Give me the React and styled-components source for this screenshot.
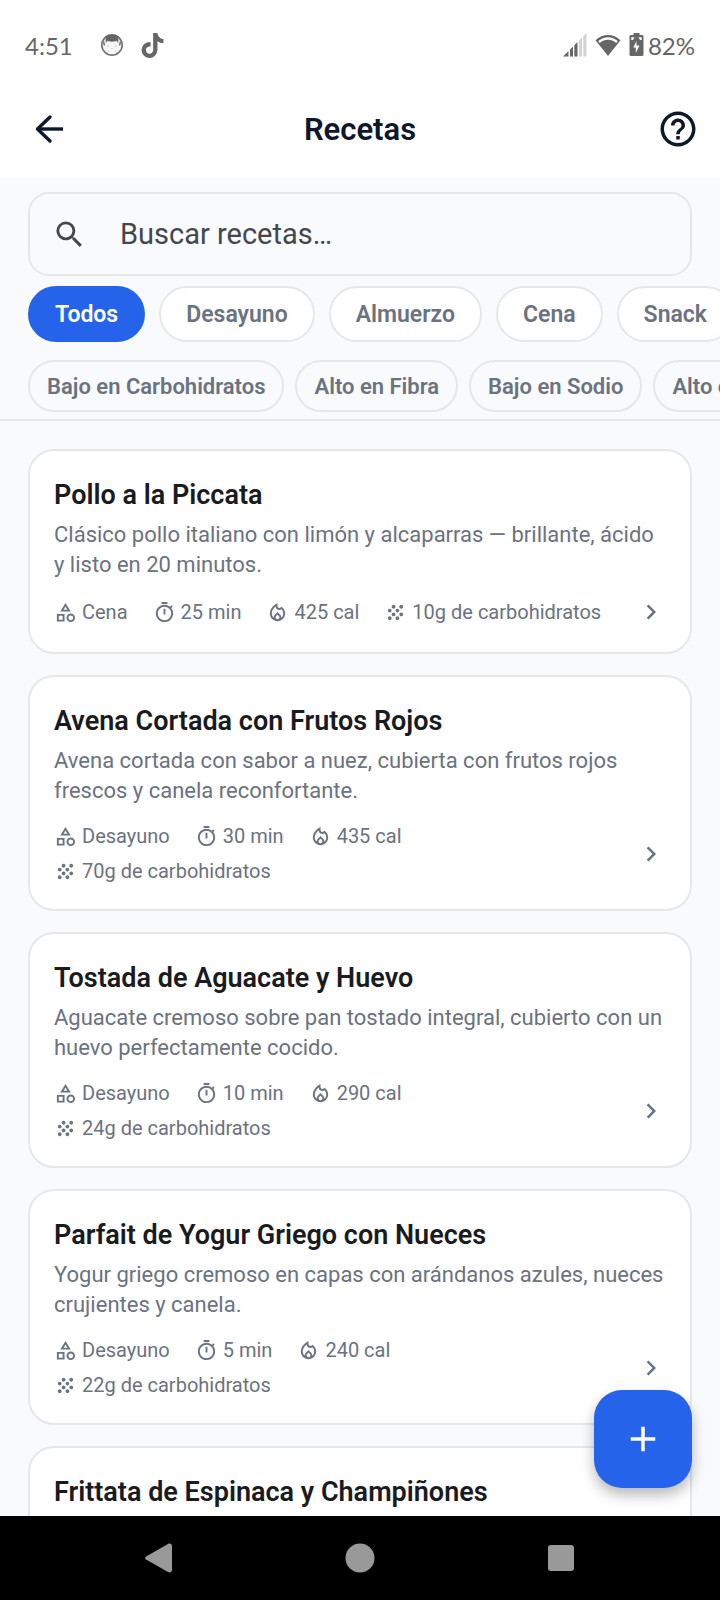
import React, { useState } from 'react';
import styled, { createGlobalStyle } from 'styled-components';
import {
  MdSearch,
  MdHelpOutline,
  MdOutlineCategory,
  MdOutlineTimer,
  MdOutlineLocalFireDepartment,
  MdGrain,
  MdChevronRight,
  MdAdd,
} from 'react-icons/md';
import { FaTiktok } from 'react-icons/fa';

const GlobalStyle = createGlobalStyle`
  * {
    box-sizing: border-box;
  }

  body {
    margin: 0;
    font-family: Roboto, 'Liberation Sans', sans-serif;
    background: #f9fafc;
  }

  button, input {
    font-family: inherit;
  }
`;

const Screen = styled.div`
  height: 100vh;
  display: flex;
  flex-direction: column;
  overflow: hidden;
`;

const StatusBar = styled.div`
  display: flex;
  align-items: center;
  justify-content: space-between;
  height: 80px;
  padding: 10px 25px 0;
  background: #fff;
  color: #666;
  font-family: Lato, sans-serif;
  font-size: 24px;
`;

const StatusGroup = styled.div`
  display: flex;
  align-items: center;
  gap: ${props => props.$gap}px;
`;

const Clock = styled.span`
  margin-right: 11px;
`;

const Battery = styled.div`
  display: flex;
  align-items: center;
  gap: 4px;
`;

const Header = styled.header`
  display: grid;
  grid-template-columns: 56px 1fr 56px;
  align-items: center;
  height: 98px;
  padding: 0 21px;
  background: #fff;
  color: #0f172a;
`;

const HeaderTitle = styled.h1`
  margin: 0;
  font-size: 31px;
  font-weight: 600;
  text-align: center;
`;

const IconButton = styled.button`
  display: flex;
  justify-content: ${props => props.$align || 'center'};
  padding: 0;
  border: none;
  background: none;
  color: inherit;
  cursor: pointer;
`;

const Filters = styled.div`
  display: flex;
  flex-direction: column;
  padding: 14px 0 7px;
  border-bottom: 2px solid #e5e7eb;
`;

const SearchBox = styled.label`
  display: flex;
  align-items: center;
  gap: 33px;
  height: 84px;
  margin: 0 28px;
  padding: 0 22px;
  border: 2px solid #e5e7eb;
  border-radius: 21px;
  color: #44474e;
`;

const SearchInput = styled.input`
  flex: 1;
  min-width: 0;
  padding: 0;
  border: none;
  outline: none;
  background: none;
  color: #44474e;
  font-size: 29px;

  &::placeholder {
    color: #44474e;
    opacity: 1;
  }
`;

const ChipRow = styled.div`
  display: flex;
  gap: ${props => props.$gap}px;
  margin-top: ${props => props.$top}px;
  padding: 0 28px;
  overflow-x: auto;
  scrollbar-width: none;
`;

const Chip = styled.button`
  flex: none;
  height: 56px;
  padding: 0 25px;
  border: 2px solid ${props => (props.$active ? '#2563eb' : '#e5e7eb')};
  border-radius: 28px;
  background: ${props => (props.$active ? '#2563eb' : '#fff')};
  color: ${props => (props.$active ? '#fff' : '#6b7280')};
  font-size: 23px;
  font-weight: 600;
  cursor: pointer;
`;

const SmallChip = styled(Chip)`
  height: 52px;
  padding: 0 17px;
  background: ${props => (props.$active ? '#2563eb' : 'transparent')};
  font-size: 22px;
`;

const List = styled.main`
  flex: 1;
  min-height: 0;
  display: flex;
  flex-direction: column;
  gap: 21px;
  padding: 28px;
  overflow-y: auto;
  scrollbar-width: none;
`;

const Card = styled.a`
  flex: none;
  padding: 26px 24px;
  border: 2px solid #e5e7eb;
  border-radius: 26px;
  background: #fff;
  color: #6b7280;
  text-decoration: none;
`;

const CardTitle = styled.h2`
  margin: 0 0 7px;
  color: #1a1b20;
  font-size: 27px;
  line-height: 36px;
  font-weight: 600;
`;

const Description = styled.p`
  margin: 0 0 18px;
  font-size: 22px;
  line-height: 30px;
  white-space: pre-line;
`;

const CardFooter = styled.div`
  display: flex;
  align-items: center;
  justify-content: space-between;
  gap: 16px;
`;

const Chevron = styled(MdChevronRight)`
  flex: none;
  width: 30px;
  height: 30px;
  margin: -1px 0;
`;

const MetaList = styled.div`
  flex: 1;
  display: flex;
  flex-wrap: wrap;
  gap: 11px 25px;
`;

const Meta = styled.span`
  display: flex;
  align-items: center;
  gap: 5px;
  font-size: 20px;
  line-height: 24px;
`;

const Fab = styled.button`
  position: absolute;
  right: 28px;
  bottom: 28px;
  display: flex;
  align-items: center;
  justify-content: center;
  width: 98px;
  height: 98px;
  border: none;
  border-radius: 28px;
  background: #2563eb;
  color: #fff;
  box-shadow: 0 7px 14px rgba(0, 0, 0, 0.28);
  cursor: pointer;
`;

const Content = styled.div`
  position: relative;
  flex: 1;
  min-height: 0;
  display: flex;
  flex-direction: column;
  overflow: hidden;
`;

const NavBar = styled.nav`
  display: flex;
  align-items: center;
  justify-content: space-around;
  height: 84px;
  padding: 0 58px;
  background: #000;
  color: #999;
`;

const categories = ['Todos', 'Desayuno', 'Almuerzo', 'Cena', 'Snack'];
const diets = ['Bajo en Carbohidratos', 'Alto en Fibra', 'Bajo en Sodio', 'Alto en Proteína'];

const recipes = [
  {
    id: 1,
    title: 'Pollo a la Piccata',
    description: 'Clásico pollo italiano con limón y alcaparras — brillante, ácido\ny listo en 20 minutos.',
    category: 'Cena',
    minutes: 25,
    calories: 425,
    carbs: 10,
  },
  {
    id: 2,
    title: 'Avena Cortada con Frutos Rojos',
    description: 'Avena cortada con sabor a nuez, cubierta con frutos rojos\nfrescos y canela reconfortante.',
    category: 'Desayuno',
    minutes: 30,
    calories: 435,
    carbs: 70,
  },
  {
    id: 3,
    title: 'Tostada de Aguacate y Huevo',
    description: 'Aguacate cremoso sobre pan tostado integral, cubierto con un\nhuevo perfectamente cocido.',
    category: 'Desayuno',
    minutes: 10,
    calories: 290,
    carbs: 24,
  },
  {
    id: 4,
    title: 'Parfait de Yogur Griego con Nueces',
    description: 'Yogur griego cremoso en capas con arándanos azules, nueces\ncrujientes y canela.',
    category: 'Desayuno',
    minutes: 5,
    calories: 240,
    carbs: 22,
  },
  {
    id: 5,
    title: 'Frittata de Espinaca y Champiñones',
    description: 'Huevos esponjosos con espinaca fresca y champiñones.',
    category: 'Desayuno',
    minutes: 25,
    calories: 310,
    carbs: 8,
  },
];

const BackIcon = () => (
  <svg width="42" height="42" viewBox="0 0 42 42" fill="none" stroke="currentColor" strokeWidth="3.4">
    <path d="M35 21H9.5" />
    <path d="M22 9L9.5 21L22 33" strokeLinecap="round" strokeLinejoin="round" />
  </svg>
);

const FaceIcon = () => (
  <svg width="24" height="24" viewBox="0 0 24 24">
    <circle cx="12" cy="12" r="10.2" fill="#f6f6f6" stroke="#777" strokeWidth="1.7" />
    <path
      d="M5.5 4C7.5 2.2 9.5 1.5 12 1.5s4.5.7 6.5 2.5l-.3 6-1.7-2.2c-1.5 1.2-7.5 1.2-9 0L5.8 10z"
      fill="#666"
    />
    <path d="M3.5 8.5l1 4M20.5 8.5l-1 4" stroke="#777" strokeWidth="1.5" />
    <path d="M7.5 13h1.5M15 13h1.5M11.5 15.5h1M8 18h1M15 18h1" stroke="#bbb" />
  </svg>
);

const SignalIcon = () => (
  <svg width="24" height="24" viewBox="0 0 24 24">
    <path d="M0 23.5L5.5 18v5.5zM7 16.5l3-3v10H7zM11.3 12.2l3.2-3.2v14.5h-3.2z" fill="#666" />
    <path d="M16 7.5l3-3v19h-3zM20.3 3.2L23.5 0v23.5h-3.2z" fill="#d3d3d3" />
  </svg>
);

const WifiIcon = () => (
  <svg width="26" height="23" viewBox="0 0 26 23">
    <path d="M.5 6.2C7.5-.8 18.5-.8 25.5 6.2L13 22z" fill="#666" />
    <path d="M3.3 7C9 1.9 17 1.9 22.7 7l-1.5 1.9C16.5 4.7 9.5 4.7 4.8 8.9z" fill="#fff" />
  </svg>
);

const BatteryIcon = () => (
  <svg width="15" height="24" viewBox="0 0 15 24">
    <path
      d="M4.5 0h6v2H13a1.5 1.5 0 0 1 1.5 1.5v18A1.5 1.5 0 0 1 13 23H2a1.5 1.5 0 0 1-1.5-1.5v-18A1.5 1.5 0 0 1 2 2h2.5z"
      fill="#666"
    />
    <path d="M2.3 4.3h3.2L4 7H2.3zM9.5 4.3h3.2V7H11zM7.5 8v4.5h3L6.8 20v-5.5H4.3z" fill="#fff" />
  </svg>
);

const RecipeCard = ({ recipe }) => (
  <Card href={`#receta-${recipe.id}`}>
    <CardTitle>{recipe.title}</CardTitle>
    <Description>{recipe.description}</Description>
    <CardFooter>
      <MetaList>
        <Meta>
          <MdOutlineCategory size={23} />
          {recipe.category}
        </Meta>
        <Meta>
          <MdOutlineTimer size={23} />
          {recipe.minutes} min
        </Meta>
        <Meta>
          <MdOutlineLocalFireDepartment size={23} />
          {recipe.calories} cal
        </Meta>
        <Meta>
          <MdGrain size={23} />
          {recipe.carbs}g de carbohidratos
        </Meta>
      </MetaList>
      <Chevron />
    </CardFooter>
  </Card>
);

const App = () => {
  const [category, setCategory] = useState('Todos');
  const [diet, setDiet] = useState(null);
  const [query, setQuery] = useState('');

  const visible = recipes.filter(
    r =>
      (category === 'Todos' || r.category === category) &&
      r.title.toLowerCase().includes(query.toLowerCase())
  );

  return (
    <Screen>
      <GlobalStyle />
      <StatusBar>
        <StatusGroup $gap={16}>
          <Clock>4:51</Clock>
          <FaceIcon />
          <FaTiktok size={25} />
        </StatusGroup>
        <StatusGroup $gap={8}>
          <SignalIcon />
          <WifiIcon />
          <Battery>
            <BatteryIcon />
            82%
          </Battery>
        </StatusGroup>
      </StatusBar>
      <Header>
        <IconButton aria-label="Volver">
          <BackIcon />
        </IconButton>
        <HeaderTitle>Recetas</HeaderTitle>
        <IconButton aria-label="Ayuda" $align="flex-end">
          <MdHelpOutline size={42} />
        </IconButton>
      </Header>
      <Content>
        <Filters>
          <SearchBox>
            <MdSearch size={35} />
            <SearchInput
              type="text"
              aria-label="Buscar recetas"
              placeholder="Buscar recetas…"
              value={query}
              onChange={e => setQuery(e.target.value)}
            />
          </SearchBox>
          <ChipRow $gap={14} $top={10}>
            {categories.map(name => (
              <Chip key={name} $active={name === category} onClick={() => setCategory(name)}>
                {name}
              </Chip>
            ))}
          </ChipRow>
          <ChipRow $gap={11} $top={18}>
            {diets.map(name => (
              <SmallChip
                key={name}
                $active={name === diet}
                onClick={() => setDiet(name === diet ? null : name)}
              >
                {name}
              </SmallChip>
            ))}
          </ChipRow>
        </Filters>
        <List>
          {visible.map(recipe => (
            <RecipeCard key={recipe.id} recipe={recipe} />
          ))}
        </List>
        <Fab aria-label="Agregar receta">
          <MdAdd size={42} />
        </Fab>
      </Content>
      <NavBar>
        <IconButton aria-label="Atrás">
          <svg width="30" height="30" viewBox="0 0 30 30" fill="currentColor">
            <path d="M2 13.5L24 1c2-1 4 0 4 2v24c0 2-2 3-4 2L2 16.5c-1.3-.8-1.3-2.2 0-3z" />
          </svg>
        </IconButton>
        <IconButton aria-label="Inicio">
          <svg width="30" height="30" viewBox="0 0 30 30" fill="currentColor">
            <circle cx="15" cy="15" r="14.5" />
          </svg>
        </IconButton>
        <IconButton aria-label="Recientes">
          <svg width="30" height="30" viewBox="0 0 30 30" fill="currentColor">
            <rect x="2" y="2" width="26" height="26" rx="3" />
          </svg>
        </IconButton>
      </NavBar>
    </Screen>
  );
};

export default App;
